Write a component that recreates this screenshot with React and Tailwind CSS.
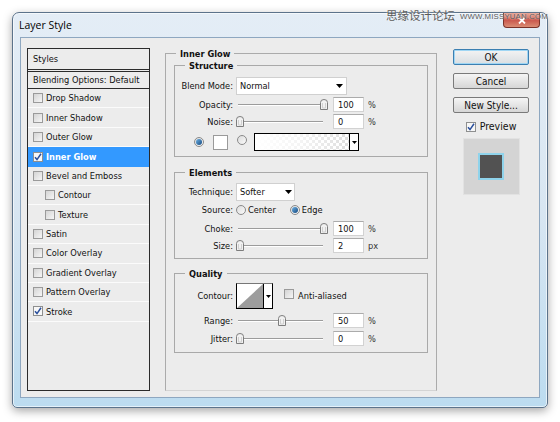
import React from "react";

const LIST = [
  { t: "Drop Shadow" },
  { t: "Inner Shadow" },
  { t: "Outer Glow" },
  { t: "Inner Glow", checked: true, sel: true },
  { t: "Bevel and Emboss" },
  { t: "Contour", indent: true },
  { t: "Texture", indent: true },
  { t: "Satin" },
  { t: "Color Overlay" },
  { t: "Gradient Overlay" },
  { t: "Pattern Overlay" },
  { t: "Stroke", checked: true },
];

function Checkbox({ checked }) {
  return (
    <span
      className={
        checked
          ? "inline-flex h-[10px] w-[10px] shrink-0 items-center justify-center border border-[#8e8f8f] bg-[#f7f7f7]"
          : "inline-flex h-[10px] w-[10px] shrink-0 items-center justify-center border border-[#9a9a9a] bg-linear-to-br from-[#d4d4d4] to-[#f6f6f6]"
      }
    >
      {checked && (
        <svg width="8" height="8" viewBox="0 0 8 8">
          <path d="M1 4.3 L3 6.6 L7 0.8" fill="none" stroke="#2a4f9c" strokeWidth="1.5" />
        </svg>
      )}
    </span>
  );
}

function Radio({ on }) {
  return (
    <span className="inline-flex h-[10px] w-[10px] shrink-0 items-center justify-center rounded-full border border-[#8a8a8a] bg-linear-to-br from-[#dcdcdc] to-[#fafafa]">
      {on && <span className="h-[6px] w-[6px] rounded-full bg-linear-to-br from-[#6fb3e6] to-[#14497f]" />}
    </span>
  );
}

function Tri() {
  return (
    <svg width="7" height="4" viewBox="0 0 7 4">
      <polygon points="0,0 7,0 3.5,4" fill="#000" />
    </svg>
  );
}

function SmallTri() {
  return (
    <svg width="5" height="3" viewBox="0 0 5 3">
      <polygon points="0,0 5,0 2.5,3" fill="#000" />
    </svg>
  );
}

function Slider({ v }) {
  return (
    <div className="relative h-[11px] w-[91px]">
      <div className="absolute left-[2px] right-[4px] top-[5px] h-[2px] border-t border-[#9c9c9c] border-b border-b-white" />
      <svg
        className="absolute top-0"
        style={{ left: (v / 100) * 84 }}
        width="8"
        height="11"
        viewBox="0 0 8 11"
      >
        <path
          d="M0.5 3.5 Q0.5 0.5 4 0.5 Q7.5 0.5 7.5 3.5 L7.5 10.5 L0.5 10.5 Z"
          fill="#f1f1f1"
          stroke="#7d7d7d"
        />
        <path d="M2.5 4 L2.5 9 L5.5 9 L5.5 4" fill="none" stroke="#d0d0d0" />
      </svg>
    </div>
  );
}

function Input({ v }) {
  return (
    <div className="ml-[6px] flex h-[15px] w-[31px] items-center border border-[#d2d2d2] border-t-[#ababab] bg-white pl-[4px]">
      {v}
    </div>
  );
}

function Unit({ children }) {
  return <span className="ml-[4px] text-[#333]">{children}</span>;
}

function Row({ label, className, children }) {
  return (
    <div className={className}>
      <span className="w-[58px] shrink-0 text-right">{label}</span>
      <div className="ml-[3px] flex items-center">{children}</div>
    </div>
  );
}

function Group({ title, className, children }) {
  return (
    <fieldset className={className}>
      <legend className="ml-[10px] px-[4px] font-bold leading-[11px]">{title}</legend>
      {children}
    </fieldset>
  );
}

function Btn({ children, def }) {
  return (
    <div
      className={
        def
          ? "flex h-[16px] w-[76px] items-center justify-center rounded-[2px] border border-[#3c7fb1] bg-linear-to-b from-[#f3f3f3] to-[#d9dee2] text-[10px] shadow-[inset_0_0_0_1px_#9fd6f4]"
          : "flex h-[16px] w-[76px] items-center justify-center rounded-[2px] border border-[#7a7a7a] bg-linear-to-b from-[#f5f5f5] to-[#d6d6d6] text-[10px]"
      }
    >
      {children}
    </div>
  );
}

export default function App() {
  return (
    <div className="relative h-[422px] w-[560px] overflow-hidden bg-white pl-[12px] pt-[12px] font-['DejaVu_Sans_Condensed','DejaVu_Sans',sans-serif] font-stretch-condensed text-[9.2px] text-[#111]">
      {/* window */}
      <div className="flex h-[396px] w-[536px] flex-col rounded-t-[7px] rounded-b-[5px] border border-[#5c738b] bg-linear-to-b from-[#e4edf6] via-[#d8e6f2] to-[#bcdcf0] shadow-[0_3px_10px_rgba(0,0,0,0.35),inset_0_0_0_1px_rgba(255,255,255,0.6)]">
        {/* title bar */}
        <div className="flex h-[24px] items-start">
          <span className="ml-[6px] mt-[5px] font-['Open_Sans',sans-serif] text-[10.5px] leading-[14px] text-black [font-stretch:normal]">
            Layer Style
          </span>
          <div className="ml-auto mr-[7px] flex h-[15px] w-[37px] items-center justify-center rounded-b-[4px] border border-t-0 border-[#7a3128] bg-linear-to-b from-[#e9a798] via-[#c9554b] to-[#da8c74]">
            <svg width="8" height="7" viewBox="0 0 8 7">
              <path d="M1 0.5 L7 6.5 M7 0.5 L1 6.5" stroke="#fff" strokeWidth="1.8" />
            </svg>
          </div>
        </div>
        {/* client */}
        <div className="mx-[7px] mb-[9px] flex flex-1 border border-[#8ea7c0] bg-[#ececec] pl-[6px] pt-[10px]">
          {/* styles list */}
          <div className="flex h-[343px] w-[123px] shrink-0 flex-col border border-[#2b2b2b]">
            <div className="flex h-[23px] items-center border-b-[3px] border-double border-[#2b2b2b] pl-[5px]">
              Styles
            </div>
            <div className="flex h-[17px] items-center border-b border-[#2b2b2b] pl-[5px]">
              Blending Options: Default
            </div>
            {LIST.map((it) => (
              <div
                key={it.t}
                className={
                  (it.sel
                    ? "bg-[#3399ff] font-bold text-white "
                    : "border-b border-[#fbfbfb] ") +
                  (it.indent ? "pl-[17px] " : "pl-[5px] ") +
                  "flex h-[19.4px] items-center"
                }
              >
                <Checkbox checked={it.checked} />
                <span className="ml-[3px]">{it.t}</span>
              </div>
            ))}
          </div>

          {/* Inner Glow group */}
          <Group
            title="Inner Glow"
            className="ml-[15px] h-[343px] w-[272px] shrink-0 border border-[#ababab] border-b-[#d4d4d4]"
          >
            <Group title="Structure" className="mx-[8px] mt-[1px] border border-[#a9a9a9] pb-[5px]">
              <div className="flex flex-col pt-[6px]">
                <Row label="Blend Mode:" className="flex h-[18px] items-center">
                  <div className="flex h-[18px] w-[111px] items-center justify-between border border-[#d0d0d0] bg-white pl-[3px] pr-[3px]">
                    <span>Normal</span>
                    <Tri />
                  </div>
                </Row>
                <Row label="Opacity:" className="mt-[2px] flex h-[15px] items-center">
                  <Slider v={100} />
                  <Input v="100" />
                  <Unit>%</Unit>
                </Row>
                <Row label="Noise:" className="mt-[2px] flex h-[15px] items-center">
                  <Slider v={0} />
                  <Input v="0" />
                  <Unit>%</Unit>
                </Row>
                <div className="mt-[4px] flex h-[18px] items-center pl-[19px]">
                  <Radio on />
                  <div className="ml-[9px] h-[15px] w-[15px] border border-[#9a9a9a] bg-white" />
                  <div className="ml-[9px]">
                    <Radio />
                  </div>
                  <div className="ml-[7px] flex h-[18px] w-[105px] border border-black">
                    <div className="relative flex-1 bg-[image:repeating-conic-gradient(#dadada_0_25%,#ffffff_0_50%)] bg-[length:6px_6px]">
                      <div className="absolute inset-0 bg-linear-to-r from-white via-white/70 to-white/10" />
                    </div>
                    <div className="flex w-[9px] items-center justify-center border-l border-black bg-white">
                      <SmallTri />
                    </div>
                  </div>
                </div>
              </div>
            </Group>

            <Group title="Elements" className="mx-[8px] mt-[10px] border border-[#a9a9a9] pb-[5px]">
              <div className="flex flex-col pt-[5px]">
                <Row label="Technique:" className="flex h-[18px] items-center">
                  <div className="flex h-[18px] w-[59px] items-center justify-between border border-[#d0d0d0] bg-white pl-[3px] pr-[2px]">
                    <span>Softer</span>
                    <Tri />
                  </div>
                </Row>
                <Row label="Source:" className="mt-[2px] flex h-[14px] items-center">
                  <Radio />
                  <span className="ml-[2px]">Center</span>
                  <div className="ml-[14px]">
                    <Radio on />
                  </div>
                  <span className="ml-[2px]">Edge</span>
                </Row>
                <Row label="Choke:" className="mt-[4px] flex h-[15px] items-center">
                  <Slider v={100} />
                  <Input v="100" />
                  <Unit>%</Unit>
                </Row>
                <Row label="Size:" className="mt-[2px] flex h-[15px] items-center">
                  <Slider v={0} />
                  <Input v="2" />
                  <Unit>px</Unit>
                </Row>
              </div>
            </Group>

            <Group title="Quality" className="mx-[8px] mt-[9px] border border-[#a9a9a9] pb-[6px]">
              <div className="flex flex-col pt-[4px]">
                <Row label="Contour:" className="flex h-[26px] items-center">
                  <div className="flex h-[26px] w-[37px] border border-black border-t-[#777]">
                    <div className="w-[26px] bg-white">
                      <svg width="26" height="24" viewBox="0 0 26 24" preserveAspectRatio="none" className="block">
                        <polygon points="0,24 26,0 26,24" fill="#9d9d9d" />
                      </svg>
                    </div>
                    <div className="flex flex-1 items-center justify-center border-l border-black bg-white">
                      <SmallTri />
                    </div>
                  </div>
                  <div className="ml-[11px]">
                    <Checkbox />
                  </div>
                  <span className="ml-[4px]">Anti-aliased</span>
                </Row>
                <Row label="Range:" className="mt-[4px] flex h-[15px] items-center">
                  <Slider v={50} />
                  <Input v="50" />
                  <Unit>%</Unit>
                </Row>
                <Row label="Jitter:" className="mt-[3px] flex h-[15px] items-center">
                  <Slider v={0} />
                  <Input v="0" />
                  <Unit>%</Unit>
                </Row>
              </div>
            </Group>
          </Group>

          {/* right column */}
          <div className="ml-[16px] flex w-[76px] shrink-0 flex-col items-center pt-[1px]">
            <Btn def>OK</Btn>
            <div className="mt-[8px]">
              <Btn>Cancel</Btn>
            </div>
            <div className="mt-[8px]">
              <Btn>New Style...</Btn>
            </div>
            <div className="mt-[8px] flex h-[12px] items-center">
              <Checkbox checked />
              <span className="ml-[4px] text-[10.5px]">Preview</span>
            </div>
            <div className="mt-[5px] flex h-[57px] w-[57px] items-center justify-center border border-[#e2e2e2] bg-[#d4d4d4]">
              <div className="h-[27px] w-[26px] border-2 border-[#8fd3eb] bg-[#525252]" />
            </div>
          </div>
        </div>
      </div>

      {/* watermark */}
      <div className="absolute right-[12px] top-[7px] flex w-max items-center gap-[5px] whitespace-nowrap text-[#5a5a5a] [text-shadow:0_0_2px_#fff]">
        <span className="font-['Noto_Sans_CJK_SC',sans-serif] text-[11.5px] leading-[16px] [font-stretch:normal]">
          思缘设计论坛
        </span>
        <span className="mt-[3px] font-['Liberation_Sans',sans-serif] text-[7.8px] leading-[12px] tracking-[0.2px] [font-stretch:normal]">
          WWW.MISSYUAN.COM
        </span>
      </div>
    </div>
  );
}
